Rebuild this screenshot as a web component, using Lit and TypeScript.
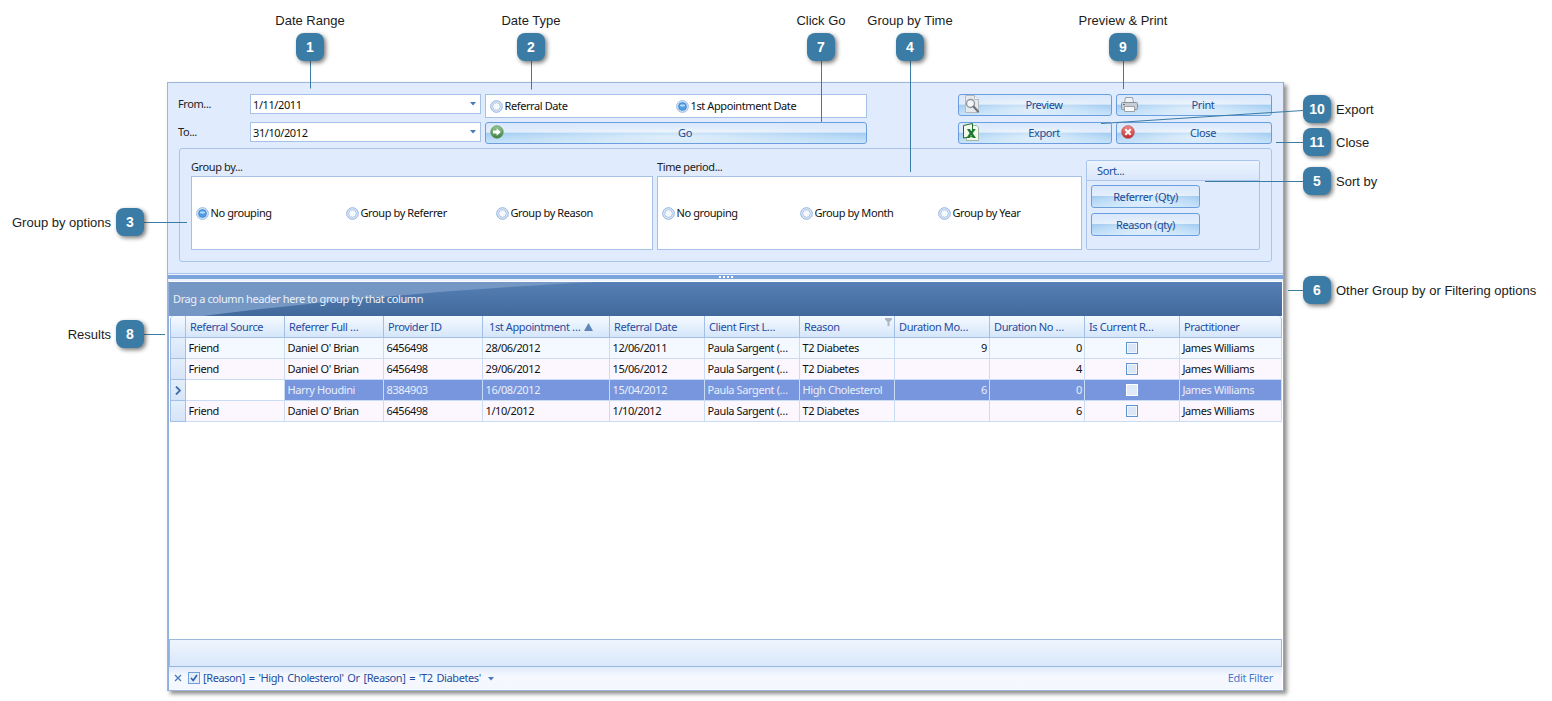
import { LitElement, html, css, svg } from "lit";
import { customElement } from "lit/decorators.js";

const icons = {
  go: html`<svg width="14" height="14" viewBox="0 0 14 14"><defs><linearGradient id="gg" x1="0" y1="0" x2="0" y2="1"><stop offset="0" stop-color="#9cc896"/><stop offset="1" stop-color="#3f7f3c"/></linearGradient></defs><circle cx="7" cy="7" r="6.2" fill="url(#gg)" stroke="#4d8a4a" stroke-width=".7"/><path d="M3 5.6h3.6V3.3L10.8 7 6.6 10.7V8.4H3z" fill="#fff"/></svg>`,
  preview: html`<svg width="17" height="18" viewBox="0 0 17 18"><path d="M2.5.5h9l4 4v13h-13z" fill="#e6e9ee" stroke="#b4bac2"/><path d="M11.5.5v4h4" fill="#fafbfc" stroke="#b4bac2"/><circle cx="7.5" cy="8.5" r="4" fill="#f4f7fa" stroke="#8f979f" stroke-width="1.4"/><path d="M10.5 11.5l4.5 5" stroke="#6d747c" stroke-width="2.2" stroke-linecap="round"/></svg>`,
  print: html`<svg width="17" height="15" viewBox="0 0 17 15"><path d="M4.5.5h7l1 5h-9z" fill="#f2f3f5" stroke="#9ca2aa"/><path d="M1.5 5.5h14a1 1 0 0 1 1 1v5a1 1 0 0 1-1 1h-14a1 1 0 0 1-1-1v-5a1 1 0 0 1 1-1z" fill="#c9cdd3" stroke="#8c929a"/><path d="M3.5 9.5h10v5h-10z" fill="#fbfbfc" stroke="#9ca2aa"/><path d="M2 7.5h2" stroke="#6d747c"/></svg>`,
  excel: html`<svg width="16" height="18" viewBox="0 0 16 18"><path d="M3.5 2.500h10l2 2v13h-12z" fill="#f4f8f1" stroke="#9fb6a0"/><path d="M.5 2.500l9-2v13l-9 1.500z" fill="#f2f8ee" stroke="#1f6b25"/><path d="M4 6h3l1.200 2.300L9.800 6h3l-3.100 4.200 3.300 4.800H9.800l-1.700-2.900L6.300 15H3.400l3.200-4.800z" fill="#1d7a2c"/></svg>`,
  close: html`<svg width="14" height="14" viewBox="0 0 14 14"><defs><linearGradient id="gr" x1="0" y1="0" x2="0" y2="1"><stop offset="0" stop-color="#f08d8d"/><stop offset="1" stop-color="#c12a2a"/></linearGradient></defs><circle cx="7" cy="7" r="6.300" fill="url(#gr)" stroke="#b84646" stroke-width=".7"/><path d="M4.300 4.300l5.400 5.400M9.700 4.300l-5.400 5.400" stroke="#fff" stroke-width="2"/></svg>`,
};

const arrow = html`<svg class="tri" width="6" height="4" viewBox="0 0 6 4"><path d="M0 0h6L3 3.500z" fill="#4a78ba"/></svg>`;

function radio(on: boolean, label: string) {
  return html`<span class="radio"><svg width="13" height="13" viewBox="0 0 13 13">
      <circle cx="6.500" cy="6.500" r="5.800" fill="#e3ecf9" stroke="#8db1e2"/>
      ${on
        ? svg`<circle cx="6.500" cy="6.500" r="4" fill="#4f9be6" stroke="#2f78cb" stroke-width=".6"/><rect x="4" y="4.500" width="5" height="2" rx="1" fill="#b6dcf9"/>`
        : svg`<circle cx="6.500" cy="6.500" r="3.900" fill="#f5f8fd" stroke="#a9c3e6"/>`}
    </svg><span class="rt">${label}</span></span>`;
}

function btn(label: string, icon?: unknown) {
  return html`<div class="btn">${icon ? html`<span class="ic">${icon}</span>` : ""}<span class="lbl">${label}</span></div>`;
}

const COLS = [
  { t: "Referral Source" },
  { t: "Referrer Full …" },
  { t: "Provider ID" },
  { t: "1st Appointment …", sort: true },
  { t: "Referral Date" },
  { t: "Client First L…" },
  { t: "Reason", filter: true },
  { t: "Duration Mo…" },
  { t: "Duration No …" },
  { t: "Is Current R…" },
  { t: "Practitioner" },
];

const ROWS = [
  ["Friend", "Daniel O' Brian", "6456498", "28/06/2012", "12/06/2011", "Paula Sargent (…", "T2 Diabetes", "9", "0", "James Williams"],
  ["Friend", "Daniel O' Brian", "6456498", "29/06/2012", "15/06/2012", "Paula Sargent (…", "T2 Diabetes", "", "4", "James Williams"],
  ["", "Harry Houdini", "8384903", "16/08/2012", "15/04/2012", "Paula Sargent (…", "High Cholesterol", "6", "0", "James Williams"],
  ["Friend", "Daniel O' Brian", "6456498", "1/10/2012", "1/10/2012", "Paula Sargent (…", "T2 Diabetes", "", "6", "James Williams"],
];

const TOP = [
  { n: "1", x: 296, y: 33, label: "Date Range" },
  { n: "2", x: 517, y: 33, label: "Date Type" },
  { n: "7", x: 807, y: 33, label: "Click Go" },
  { n: "4", x: 896, y: 33, label: "Group by Time" },
  { n: "9", x: 1109, y: 33, label: "Preview & Print" },
];
const RIGHT = [
  { n: "10", y: 95, label: "Export" },
  { n: "11", y: 128, label: "Close" },
  { n: "5", y: 167, label: "Sort by" },
  { n: "6", y: 276, label: "Other Group by or Filtering options" },
];
const LEFT = [
  { n: "3", y: 208, label: "Group by options" },
  { n: "8", y: 320, label: "Results" },
];
const LINES = [
  [310.5, 61, 310.5, 88.5],
  [531.5, 61, 531.5, 89.5],
  [821.5, 61, 821.5, 122],
  [910.5, 61, 910.5, 172],
  [1123.5, 61, 1123.5, 89],
  [1303, 110.5, 1101, 123.5],
  [1303, 142.5, 1276, 142.5],
  [1303, 181.5, 1205, 181.5],
  [1303, 290.5, 1288, 290.5],
  [144, 222.5, 187, 222.5],
  [144, 334.5, 165, 334.5],
];

@customElement("app-root")
export class AppRoot extends LitElement {
  static styles = css`
    :host {
      display: block;
      position: relative;
      width: 1552px;
      height: 701px;
      overflow: hidden;
      background: #fff;
      font-family: "Noto Sans", "DejaVu Sans", sans-serif;
      font-size: 11px;
      letter-spacing: -0.4px;
      color: #1a1a1a;
    }
    .canvas { padding: 82px 0 0 167px; }
    .window {
      width: 1117px;
      height: 609px;
      box-sizing: border-box;
      border: 1px solid #9db6d8;
      border-right-color: #8fa6c6;
      background: #fff;
      box-shadow: 3px 3px 4px rgba(70, 70, 70, 0.6);
      display: flex;
      flex-direction: column;
    }
    .panel {
      height: 191px;
      box-sizing: border-box;
      flex: none;
      background: #e0ecfd;
      border-bottom: 1px solid #a9c5ec;
      padding: 11px 11px 0 10px;
    }
    .controls {
      display: grid;
      grid-template-columns: 68px 231px 382px 83px 154px 156px;
      grid-template-rows: 24px 22px;
      gap: 4px;
      align-items: start;
    }
    .lab { height: 20px; line-height: 20px; color: #222; }
    .input {
      height: 20px;
      box-sizing: border-box;
      border: 1px solid #a6c1e6;
      background: #fff;
      display: flex;
      align-items: center;
      justify-content: space-between;
      padding: 0 4px 0 2px;
      color: #111;
    }
    .tri { flex: none; }
    .radiobox {
      height: 24px;
      box-sizing: border-box;
      border: 1px solid #a6c1e6;
      background: #fff;
      display: grid;
      grid-template-columns: 186px 1fr;
      align-items: center;
      padding-left: 4px;
    }
    .radio { display: flex; align-items: center; gap: 1.500px; color: #111; white-space: nowrap; }
    .radio svg { flex: none; }
    .rt { padding-bottom: 2px; }
    .btn {
      height: 22px;
      box-sizing: border-box;
      border: 1px solid #6a9edd;
      border-radius: 3px;
      display: flex;
      align-items: center;
      padding: 0 0 2px 4px;
      color: #204d96;
      background:
        radial-gradient(ellipse 50% 60% at 50% 70%, rgba(255, 255, 255, 0.6), rgba(255, 255, 255, 0) 100%),
        linear-gradient(#d9e8fb 0%, #e3eefc 46%, #a3cdf2 50%, #c9e4fa 100%);
    }
    .ic { flex: none; width: 14px; height: 14px; display: flex; align-items: center; overflow: visible; }
    .ic svg { flex: none; }
    .lbl { flex: 1; text-align: center; white-space: nowrap; }
    .group {
      margin: 4px 0 0 1px;
      width: 1093px;
      height: 114px;
      box-sizing: border-box;
      border: 1px solid #a9c5ec;
      border-radius: 3px;
      padding: 11px 0 0 11px;
      display: grid;
      grid-template-columns: 462px 425px 174px;
      gap: 4px;
      align-items: start;
      align-content: start;
    }
    .opt { display: flex; flex-direction: column; }
    .opt .cap { height: 16px; line-height: 14px; color: #222; }
    .optbox {
      height: 74px;
      box-sizing: border-box;
      border: 1px solid #a6c1e6;
      background: #fff;
      padding-left: 4px;
      display: grid;
      align-items: center;
    }
    .g3 { grid-template-columns: 150px 150px 1fr; }
    .t3 { grid-template-columns: 138px 138px 1fr; }
    .sort {
      height: 90px;
      box-sizing: border-box;
      border: 1px solid #a9c5ec;
      border-radius: 2px;
    }
    .sorthead {
      height: 20px;
      box-sizing: border-box;
      border-bottom: 1px solid #a9c5ec;
      background: linear-gradient(#ebf3fe, #dae7fb);
      color: #204d96;
      padding-left: 10px;
      line-height: 20px;
    }
    .sortbody { padding: 4px; display: flex; flex-direction: column; gap: 5px; align-items: flex-start; }
    .sortbody .btn { width: 109px; height: 23px; padding: 0; }
    .splitwrap { flex: none; padding: 1px 0 2px; background: #edf3fc; }
    .split { height: 4px; background: #7ba3dc; display: flex; justify-content: center; gap: 2px; padding-top: 1px; box-sizing: border-box; }
    .split i { width: 2px; height: 2px; background: #fff; }
    .gridwrap {
      flex: 1;
      min-height: 0;
      display: flex;
      flex-direction: column;
      border-top: 1px solid #fff;
      border-left: 1px solid #8fb0dc;
      border-right: 1px solid #fff;
    }
    .drag {
      height: 34px;
      flex: none;
      position: relative;
      box-sizing: border-box;
      background: linear-gradient(#5680b5, #41699c);
      color: #eaf1fa;
      line-height: 34px;
      padding-left: 4px;
    }
    .drag svg { position: absolute; left: 0; top: 0; }
    .drag span { position: relative; }
    .table { flex: none; margin-left: 1px; }
    .tr {
      display: grid;
      grid-template-columns: 16px 99px 99px 99px 127px 95px 95px 95px 95px 95px 95px 102px;
    }
    .th {
      height: 22px;
      box-sizing: border-box;
      border-right: 1px solid #a3bfe4;
      border-bottom: 1px solid #a3bfe4;
      background: linear-gradient(#f5faff, #d5e6fa);
      color: #1f4da0;
      padding-left: 4px;
      display: flex;
      align-items: center;
      gap: 4px;
      position: relative;
      white-space: nowrap;
    }
    .th.sorted { padding-left: 6px; }
    .th:first-child { border-left: 1px solid #a3bfe4; border-top-left-radius: 4px; padding: 0; }
    .th:last-child { border-top-right-radius: 4px; }
    .funnel { position: absolute; right: 2px; top: 2px; }
    .td {
      height: 21px;
      box-sizing: border-box;
      border-right: 1px solid #c8dcf4;
      border-bottom: 1px solid #c8dcf4;
      padding: 0 2.500px;
      line-height: 20px;
      color: #111;
      white-space: nowrap;
      overflow: hidden;
      background: #f4f9ff;
    }
    .even .td { background: #fcf7fe; }
    .sel .td { background: #7896dd; color: #e9effc; }
    .td.num { text-align: right; padding-right: 2px; }
    .td.ind {
      padding: 0;
      background: linear-gradient(#e5effb, #d5e4f7);
      border-left: 1px solid #a3bfe4;
      border-right-color: #a3bfe4;
      border-bottom-color: #a3bfe4;
      display: flex;
      align-items: center;
      justify-content: center;
    }
    .sel .td.blank { background: #fff; }
    .td.chk { display: flex; align-items: center; justify-content: center; padding: 0; }
    .box { width: 12px; height: 12px; box-sizing: border-box; border: 1px solid #6294cf; background: #dbe6f6; box-shadow: inset 0 0 0 1px #f3f7fc; }
    .sel .box { border-color: #fff; background: #dfe9f8; box-shadow: none; }
    .empty { flex: 1; background: #fff; }
    .foot {
      height: 28px;
      flex: none;
      box-sizing: border-box;
      border: 1px solid #9ab9dc;
      background: linear-gradient(#eff5fd, #d9e8fb);
    }
    .filter {
      height: 23px;
      flex: none;
      box-sizing: border-box;
      background: linear-gradient(#dfeafa, #f5f9ff 40%, #f4f8fe);
      display: flex;
      align-items: center;
      padding: 0 9px 2px 5px;
      color: #1f4da0;
      white-space: nowrap;
    }
    .filter .x { width: 9px; margin-right: 5px; display: flex; }
    .fbox { width: 12px; height: 12px; box-sizing: border-box; border: 1px solid #6f9fd6; background: #e4edf9; margin-right: 3px; display: flex; }
    .ftext { word-spacing: 1.300px; }
    .filter .tri { margin-left: 7px; margin-top: 2px; }
    .edit { margin-left: auto; color: #4c78c8; letter-spacing: -0.3px; }
    .lines { position: absolute; left: 0; top: 0; pointer-events: none; }
    .badge {
      position: absolute;
      width: 28px;
      height: 28px;
      box-sizing: border-box;
      border-radius: 8px;
      background: #3a7ca5;
      color: #fff;
      font: bold 14px/28px "Liberation Sans", Arial, sans-serif;
      letter-spacing: 0;
      text-align: center;
      box-shadow: 2px 2px 4px rgba(50, 50, 50, 0.65);
    }
    .note {
      position: absolute;
      font: 13px/16px "Liberation Sans", Arial, sans-serif;
      letter-spacing: 0;
      color: #1c1c1c;
      white-space: nowrap;
    }
    .note.top { top: 13px; width: 200px; text-align: center; }
    .note.right { left: 1336px; }
    .note.left { right: 1441px; }
  `;

  private renderRow(r: string[], i: number) {
    const cls = "tr" + (i % 2 ? " even" : "") + (i === 2 ? " sel" : "");
    return html`<div class=${cls}>
      <div class="td ind">${i === 2
        ? html`<svg width="6" height="9" viewBox="0 0 6 9"><path d="M1 .5L5 4.500 1 8.500" fill="none" stroke="#3f6ea8" stroke-width="1.800"/></svg>`
        : ""}</div>
      ${r.slice(0, 9).map(
        (c, j) => html`<div class="td ${j === 7 || j === 8 ? "num" : ""} ${i === 2 && j === 0 ? "blank" : ""}">${c}</div>`
      )}
      <div class="td chk"><span class="box"></span></div>
      <div class="td">${r[9]}</div>
    </div>`;
  }

  render() {
    return html`
      <div class="canvas">
        <div class="window">
          <div class="panel">
            <div class="controls">
              <div class="lab">From...</div>
              <div class="input">1/11/2011${arrow}</div>
              <div class="radiobox">${radio(false, "Referral Date")}${radio(true, "1st Appointment Date")}</div>
              <div></div>
              ${btn("Preview", icons.preview)}
              ${btn("Print", icons.print)}
              <div class="lab">To...</div>
              <div class="input">31/10/2012${arrow}</div>
              ${btn("Go", icons.go)}
              <div></div>
              ${btn("Export", icons.excel)}
              ${btn("Close", icons.close)}
            </div>
            <div class="group">
              <div class="opt">
                <div class="cap">Group by...</div>
                <div class="optbox g3">${radio(true, "No grouping")}${radio(false, "Group by Referrer")}${radio(false, "Group by Reason")}</div>
              </div>
              <div class="opt">
                <div class="cap">Time period...</div>
                <div class="optbox t3">${radio(false, "No grouping")}${radio(false, "Group by Month")}${radio(false, "Group by Year")}</div>
              </div>
              <div class="sort">
                <div class="sorthead">Sort...</div>
                <div class="sortbody">${btn("Referrer (Qty)")}${btn("Reason (qty)")}</div>
              </div>
            </div>
          </div>
          <div class="splitwrap"><div class="split"><i></i><i></i><i></i><i></i></div></div>
          <div class="gridwrap">
            <div class="drag">
              <svg width="440" height="34" viewBox="0 0 440 34"><path d="M0 0H430C300 6 160 18 34 34H0z" fill="#7597c4"/></svg>
              <span>Drag a column header here to group by that column</span>
            </div>
            <div class="table">
              <div class="tr">
                <div class="th"></div>
                ${COLS.map(
                  (c) => html`<div class="th ${c.sort ? "sorted" : ""}">${c.t}${c.sort
                    ? html`<svg width="9" height="8" viewBox="0 0 9 8"><path d="M4.500 0L9 8H0z" fill="#5f86b8"/></svg>`
                    : ""}${c.filter
                    ? html`<svg class="funnel" width="7" height="8" viewBox="0 0 7 8"><path d="M0 0h7v1.500L4.500 4v4h-2V4L0 1.500z" fill="#a9b5c4"/></svg>`
                    : ""}</div>`
                )}
              </div>
              ${ROWS.map((r, i) => this.renderRow(r, i))}
            </div>
            <div class="empty"></div>
            <div class="foot"></div>
            <div class="filter">
              <span class="x"><svg width="8" height="8" viewBox="0 0 8 8"><path d="M1 1l6 6M7 1L1 7" stroke="#4a78ba" stroke-width="1.300"/></svg></span>
              <span class="fbox"><svg width="10" height="10" viewBox="0 0 10 10"><path d="M2 5l2.200 2.500L8 2" fill="none" stroke="#2a5fa8" stroke-width="1.600"/></svg></span>
              <span class="ftext">[Reason] = 'High Cholesterol' Or [Reason] = 'T2 Diabetes'</span>
              ${arrow}
              <span class="edit">Edit Filter</span>
            </div>
          </div>
        </div>
      </div>
      <svg class="lines" width="1552" height="701">
        ${LINES.map((l) => svg`<line x1=${l[0]} y1=${l[1]} x2=${l[2]} y2=${l[3]} stroke="#3a7ca5" stroke-width="1"/>`)}
      </svg>
      ${TOP.map(
        (b) => html`<div class="note top" style="left:${b.x + 14 - 100}px">${b.label}</div>
          <div class="badge" style="left:${b.x}px;top:${b.y}px">${b.n}</div>`
      )}
      ${RIGHT.map(
        (b) => html`<div class="note right" style="top:${b.y + 7}px">${b.label}</div>
          <div class="badge" style="left:1303px;top:${b.y}px">${b.n}</div>`
      )}
      ${LEFT.map(
        (b) => html`<div class="note left" style="top:${b.y + 7}px">${b.label}</div>
          <div class="badge" style="left:116px;top:${b.y}px">${b.n}</div>`
      )}
    `;
  }
}
